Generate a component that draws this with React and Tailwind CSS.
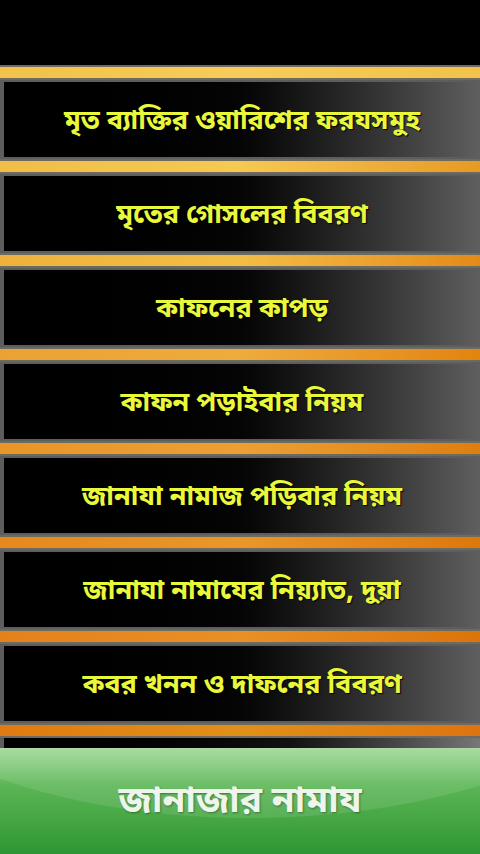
import React from "react";

const items = [
  { t: "মৃত ব্যাক্তির ওয়ারিশের ফরযসমুহ", bar: "from-[#f2c24a] via-[#f7cc58] to-[#f2c24a]" },
  { t: "মৃতের গোসলের বিবরণ", bar: "from-[#f0be46] via-[#f6c952] to-[#e79a22]" },
  { t: "কাফনের কাপড়", bar: "from-[#eeb23c] via-[#f2bd46] to-[#e48a18]" },
  { t: "কাফন পড়াইবার নিয়ম", bar: "from-[#eba232] via-[#eeac3a] to-[#e2840f]" },
  { t: "জানাযা নামাজ পড়িবার নিয়ম", bar: "from-[#e99528] via-[#eca032] to-[#df7e0c]" },
  { t: "জানাযা নামাযের নিয়্যাত, দুয়া", bar: "from-[#e6891c] via-[#ea9628] to-[#dd780a]" },
  { t: "কবর খনন ও দাফনের বিবরণ", bar: "from-[#e4821a] via-[#e89024] to-[#db740a]" },
];

function Bar({ cls }) {
  return (
    <div className="h-[15px] shrink-0 bg-[#6e6a60] py-[2px]">
      <div className={`h-full bg-gradient-to-r ${cls}`} />
    </div>
  );
}

export default function App() {
  return (
    <div
      className="w-[480px] h-[854px] bg-black flex flex-col overflow-hidden"
      style={{ fontFamily: '"Noto Sans Bengali", "Noto Sans", "Lohit Bengali", sans-serif' }}
    >
      <div className="h-[65px] shrink-0 bg-black" />
      {items.map((it, i) => (
        <React.Fragment key={i}>
          <Bar cls={it.bar} />
          <div className="h-[79px] shrink-0 bg-[#5d5d5d] pl-[4px] py-[2px]">
            <div className="h-full pt-[5px] bg-gradient-to-r from-black via-[#050505] via-50% to-[#5f5f5f] flex items-center justify-center">
              <span className="text-[27px] font-bold text-[#eaf83c] [text-shadow:1px_1px_1px_#000]">
                {it.t}
              </span>
            </div>
          </div>
        </React.Fragment>
      ))}
      <Bar cls="from-[#e07a12] via-[#e09018] to-[#de7410]" />
      <div className="h-[10px] shrink-0 bg-[#5d5d5d] pl-[4px]">
        <div className="h-full bg-gradient-to-r from-black via-[#111] via-60% to-[#777]" />
      </div>
      <div className="relative flex-1 bg-gradient-to-b from-[#9fd797] via-[#5bb655] via-35% to-[#2c9632] flex items-center justify-center overflow-hidden">
        <div className="absolute left-[-150px] top-[-290px] w-[800px] h-[360px] rounded-[50%] bg-white/10" />
        <span className="relative pt-[4px] text-[37px] font-bold text-[#eef5ea] [text-shadow:1px_1px_2px_rgba(0,0,0,0.35)]">
          জানাজার নামায
        </span>
      </div>
    </div>
  );
}
